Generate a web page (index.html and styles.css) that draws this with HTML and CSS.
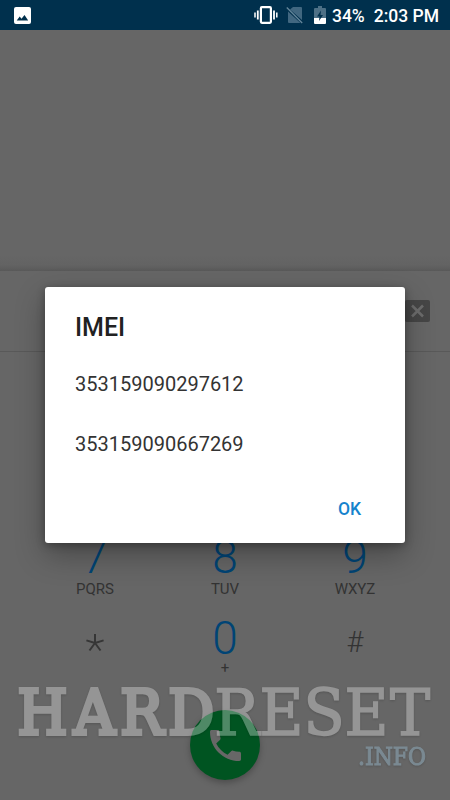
FILE: index.html
```html
<!DOCTYPE html>
<html lang="en">
<head>
<meta charset="utf-8">
<title>Phone</title>
<link rel="stylesheet" href="styles.css">
</head>
<body>
<div class="screen">
  <header class="status">
    <svg class="photo" width="17" height="17" viewBox="0 0 17 17"><rect width="17" height="17" rx="2" fill="#fff"/><path d="M2.7 13.5 5.7 9.5 7.5 11.8 10.5 8 14.2 13.5Z" fill="#00304d"/></svg>
    <svg class="vibrate" width="24" height="18" viewBox="0 0 24 18" fill="none" stroke="#fff"><rect x="6.9" y="1.2" width="10" height="15.6" rx="1" stroke-width="2.2"/><path d="M3.8 4.5v9M20 4.5v9" stroke-width="1.8"/><path d="M1 6.5v5M22.8 6.5v5" stroke-width="1.5"/></svg>
    <svg class="sim" width="18" height="18" viewBox="0 0 18 18"><path d="M7 1h8q1 0 1 1v12L4 3.5ZM2 5.5 14.5 17H3q-1 0-1-1Z" fill="#416780"/><path d="M.8 1.5 16.2 17" stroke="#65879b" stroke-width="1.3"/></svg>
    <svg class="battery" width="12" height="18" viewBox="0 0 12 18"><path d="M4 0h4v2h3q1 0 1 1v9H0V3q0-1 1-1h3Z" fill="#4d7086"/><path d="M0 12h12v5q0 1-1 1H1q-1 0-1-1Z" fill="#fff"/><path d="M7 4.5 3 10.5h2.5L5 15l4-6H6.5Z" fill="#00304d"/></svg>
    <span class="percent">34%</span>
    <span class="clock">2:03 PM</span>
  </header>
  <div class="history"></div>
  <div class="number">
    <svg width="25" height="22" viewBox="0 0 25 22"><rect width="25" height="22" rx="2" fill="#464646"/><path d="m7 5.500 11 11m0-11-11 11" stroke="#6c6c6c" stroke-width="2.500"/></svg>
  </div>
  <main class="dialer">
    <div class="keys">
      <div class="key"><span class="digit">7</span><span class="letters">PQRS</span></div>
      <div class="key"><span class="digit">8</span><span class="letters">TUV</span></div>
      <div class="key"><span class="digit">9</span><span class="letters">WXYZ</span></div>
      <div class="key"><svg width="20" height="20" viewBox="0 0 20 20" class="star"><path d="M10 10V1M10 10 1.400 7.400M10 10l8.600-2.600M10 10 4.500 17.500M10 10l5.500 7.500" stroke="#363636" stroke-width="2"/></svg></div>
      <div class="key"><span class="digit">0</span><span class="letters plus">+</span></div>
      <div class="key"><span class="hash">#</span></div>
    </div>
    <div class="call"><svg width="31" height="31" viewBox="3 3 18 18"><path fill="#676767" d="M6.6 10.8c1.4 2.8 3.8 5.1 6.6 6.6l2.2-2.2c.3-.3.7-.4 1-.2 1.1.4 2.3.6 3.6.6.6 0 1 .4 1 1V20c0 .6-.4 1-1 1C10.600 21 3 13.400 3 4c0-.6.400-1 1-1h3.500c.600 0 1 .400 1 1 0 1.200.200 2.400.600 3.600.100.300 0 .700-.200 1Z"/></svg></div>
  </main>
  <section class="dialog">
    <h1>IMEI</h1>
    <p>353159090297612</p>
    <p>353159090667269</p>
    <div class="actions"><span>OK</span></div>
  </section>
  <svg class="watermark" width="450" height="160" viewBox="0 640 450 160">
    <g transform="scale(.94 1)">
      <text class="hard" y="734" x="18.500 78.500 128 179">HARD</text>
      <text class="reset" y="735" x="228 276 323 366.500 415">RESET</text>
    </g>
    <text class="info" x="358" y="764.500" textLength="68" lengthAdjust="spacingAndGlyphs">.INFO</text>
  </svg>
</div>
</body>
</html>
```
FILE: styles.css
```css
* { box-sizing: border-box; }
body { margin: 0; font-family: Roboto, "Liberation Sans", sans-serif; }
.screen { position: relative; width: 450px; height: 800px; overflow: hidden; background: #666; display: flex; flex-direction: column; }
.status { height: 30px; flex: none; background: #00304d; color: #fff; display: flex; align-items: center; padding: 0 11px 0 14px; font-size: 17.5px; font-weight: 500; line-height: 30px; }
.vibrate { margin-left: auto; }
.sim { margin-left: 8px; }
.battery { margin-left: 10px; }
.percent { margin: 2px 0 0 6px; }
.clock { margin: 2px 0 0 9px; }
.history { height: 241px; flex: none; background: linear-gradient(#666 225px, #636363 235px, #595959); }
.number { height: 81px; flex: none; border-bottom: 1px solid #595959; display: flex; justify-content: flex-end; align-items: center; padding-right: 20px; }
.dialer { flex: 1; padding: 178px 30px 0; }
.keys { display: grid; grid-template-columns: repeat(3, 130px); grid-auto-rows: 81px; }
.key { display: flex; flex-direction: column; align-items: center; color: #333; }
.digit { font-size: 46px; line-height: 54px; font-weight: 300; color: #004475; }
.letters { font-size: 15px; line-height: 18px; margin-top: -4px; }
.plus { margin-top: -6px; }
.star { margin-top: 22px; }
.hash { font-size: 29px; font-weight: 300; line-height: 34px; margin-top: 14px; }
.call { width: 70px; height: 70px; margin: 18px auto 0; border-radius: 50%; background: #005421; display: flex; align-items: center; justify-content: center; box-shadow: 0 3px 6px rgba(0,0,0,.25); }
.dialog { position: absolute; left: 45px; top: 287px; width: 360px; height: 256px; padding: 25px 30px 0; background: #fff; border-radius: 3px; box-shadow: 0 12px 30px rgba(0,0,0,.3), 0 2px 9px rgba(0,0,0,.3); }
.dialog h1 { margin: 0 0 26px; font-size: 25px; line-height: 32px; font-weight: 500; color: #212121; }
.dialog p { margin: 0 0 32px; font-size: 20px; line-height: 28px; color: #333; }
.dialog .actions { display: flex; justify-content: flex-end; padding-right: 14px; margin-top: 39px; color: #1583cd; font-size: 17.5px; line-height: 24px; font-weight: 500; }
.watermark { position: absolute; left: 0; top: 640px; opacity: .31; filter: drop-shadow(0 1px 1px rgba(0,0,0,.5)); }
.hard, .reset { font-family: "DejaVu Serif", serif; fill: #fff; stroke: #fff; }
.hard { font-size: 61px; stroke-width: 4px; }
.reset { font-size: 64px; stroke-width: 1.6px; }
.info { font-family: "DejaVu Serif", serif; font-size: 23.5px; fill: #a8d9f5; stroke: #a8d9f5; stroke-width: 1px; }
```
